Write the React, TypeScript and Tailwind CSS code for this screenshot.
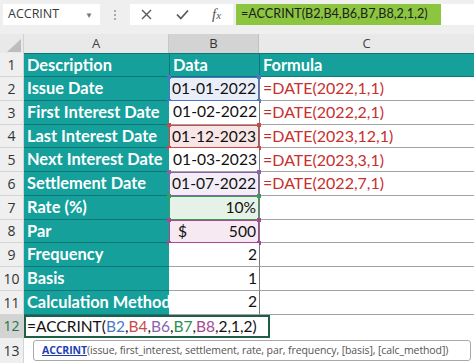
import React from 'react';

type RowData = { n: number; a: string; b: string; c?: string; dollar?: boolean; box?: string; handle?: string };

const ROWS: RowData[] = [
  { n: 2, a: 'Issue Date', b: '01-01-2022', c: '=DATE(2022,1,1)', box: 'bg-[#e9eef8] border border-[#4a78c8]', handle: 'bg-[#4a78c8]' },
  { n: 3, a: 'First Interest Date', b: '01-02-2022', c: '=DATE(2022,2,1)' },
  { n: 4, a: 'Last Interest Date', b: '01-12-2023', c: '=DATE(2023,12,1)', box: 'bg-[#f8e6e6] border border-[#c84a4a]', handle: 'bg-[#c84a4a]' },
  { n: 5, a: 'Next Interest Date', b: '01-03-2023', c: '=DATE(2023,3,1)' },
  { n: 6, a: 'Settlement Date', b: '01-07-2022', c: '=DATE(2022,7,1)', box: 'bg-[#f3edf7] border border-[#8a63ad]', handle: 'bg-[#8a63ad]' },
  { n: 7, a: 'Rate (%)', b: '10%', box: 'bg-[#e6f2e7] border border-[#3b9a5c]', handle: 'bg-[#3b9a5c]' },
  { n: 8, a: 'Par', b: '500', dollar: true, box: 'bg-[#f6e9f2] border border-[#a24a92]', handle: 'bg-[#a24a92]' },
  { n: 9, a: 'Frequency', b: '2' },
  { n: 10, a: 'Basis', b: '1' },
  { n: 11, a: 'Calculation Method', b: '2' },
];

function Handles({ cls }: { cls: string }) {
  return (
    <>
      <span className={`absolute -left-[3px] -top-[3px] w-[4px] h-[4px] ${cls}`} />
      <span className={`absolute -right-[3px] -top-[3px] w-[4px] h-[4px] ${cls}`} />
      <span className={`absolute -left-[3px] -bottom-[3px] w-[4px] h-[4px] ${cls}`} />
      <span className={`absolute -right-[3px] -bottom-[3px] w-[4px] h-[4px] ${cls}`} />
    </>
  );
}

function RowNum({ n, active }: { n: number; active?: boolean }) {
  return (
    <div className={`w-[24px] shrink-0 h-full flex items-center justify-center text-[14px] border-r border-b border-[#d4d4d4] font-['Open_Sans',sans-serif] ${active ? 'bg-[#d3d3d3] text-[#217346]' : 'bg-[#efefef] text-[#333]'}`}>
      {n}
    </div>
  );
}

export default function App() {
  return (
    <div className="w-[474px] h-[363px] overflow-hidden bg-white font-['Lato',sans-serif] text-[#111]">
      {/* formula bar */}
      <div className="h-[34px] bg-[#efefef] flex items-start pt-[4px] pl-[3px]">
        <div className="w-[97px] h-[21px] bg-white flex items-center justify-between pl-[5px] pr-[7px] font-['Open_Sans',sans-serif] text-[12.5px] text-[#3a3a3a]">
          <span>ACCRINT</span>
          <span className="text-[8px] text-[#777]">▼</span>
        </div>
        <div className="w-[30px] h-[21px] flex flex-col items-center justify-center gap-[2px]">
          <span className="w-[2px] h-[2px] bg-[#aaa]" />
          <span className="w-[2px] h-[2px] bg-[#aaa]" />
          <span className="w-[2px] h-[2px] bg-[#aaa]" />
        </div>
        <div className="w-[103px] h-[21px] bg-white flex items-center text-[#555]">
          <svg className="ml-[11px]" width="11" height="11" viewBox="0 0 11 11"><path d="M1 1 L10 10 M10 1 L1 10" stroke="#595959" strokeWidth="1.4" fill="none" /></svg>
          <svg className="ml-[24px]" width="13" height="11" viewBox="0 0 13 11"><path d="M1 5.5 L4.8 9.5 L12 1.5" stroke="#595959" strokeWidth="1.8" fill="none" /></svg>
          <span className="ml-[23px] font-['Liberation_Serif',serif] italic text-[15px] text-[#555] leading-none">f<span className="text-[11px]">x</span></span>
        </div>
        <div className="ml-[3px] w-[205px] h-[21px] bg-[#8cc540] flex items-center pl-[5px] text-[12.6px] text-[#1d1d1d] whitespace-nowrap overflow-hidden">
          =ACCRINT(B2,B4,B6,B7,B8,2,1,2)
        </div>
        <div className="flex-1 h-[21px] bg-white" />
      </div>

      {/* column headers */}
      <div className="h-[19px] flex font-['Open_Sans',sans-serif] text-[13px] text-[#444]">
        <div className="w-[24px] h-full bg-[#e9e9e9] border-r border-[#d0d0d0] relative">
          <svg className="absolute right-[2px] bottom-[1px]" width="14" height="13" viewBox="0 0 14 13"><path d="M14 0 L14 13 L0 13 Z" fill="#bdbdbd" /></svg>
        </div>
        <div className="w-[145px] h-full bg-[#e9e9e9] border-r border-[#c8c8c8] flex items-center justify-center">A</div>
        <div className="w-[90px] h-full bg-[#d3d3d3] border-r border-[#c0c0c0] flex items-center justify-center text-[#333]">B</div>
        <div className="flex-1 h-full bg-[#e9e9e9] flex items-center justify-center">C</div>
      </div>

      {/* row 1 */}
      <div className="h-[24px] flex text-[16.4px]">
        <RowNum n={1} />
        <div className="w-[145px] h-full bg-[#15a09c] border-t border-b border-[#0e7775] text-white font-bold flex items-center px-[3px]">Description</div>
        <div className="w-[90px] h-full bg-[#15a09c] border-t border-b border-l border-[#0e7775] text-white font-bold flex items-center px-[3px]">Data</div>
        <div className="flex-1 h-full bg-[#15a09c] border-t border-b border-l border-[#0e7775] text-white font-bold flex items-center px-[3px]">Formula</div>
      </div>

      {ROWS.map(r => (
        <div key={r.n} className="h-[23.75px] flex text-[16px]">
          <RowNum n={r.n} />
          <div className="w-[145px] h-full bg-[#15a09c] border-b border-[#0e7775] text-white font-bold text-[16.4px] flex items-center px-[3px] whitespace-nowrap overflow-hidden">{r.a}</div>
          <div className={`w-[90px] h-full relative flex items-center justify-end px-[2px] text-[15.6px] whitespace-nowrap ${r.box ? r.box : 'bg-white border-b border-[#a3a3a3]'}`}>
            {r.dollar && <span className="absolute left-[8px]">$</span>}
            <span>{r.b}</span>
            {r.handle && <Handles cls={r.handle} />}
          </div>
          <div className="flex-1 h-full bg-white border-b border-l border-[#a3a3a3] border-l-[#7a7a7a] flex items-center px-[3px] text-[#c7302e] whitespace-nowrap">{r.c}</div>
        </div>
      ))}

      {/* row 12 - edit */}
      <div className="h-[23.75px] flex text-[15.5px]">
        <RowNum n={12} active />
        <div className="w-[246px] h-full bg-white border-2 border-[#1f5f47] flex items-center px-[1px] whitespace-nowrap">
          <span>=ACCRINT(</span>
          <span className="text-[#4a78c8]">B2</span>,
          <span className="text-[#c84a4a]">B4</span>,
          <span className="text-[#8a63ad]">B6</span>,
          <span className="text-[#2f8f52]">B7</span>,
          <span className="text-[#a24a92]">B8</span>
          <span>,2,1,2)</span>
        </div>
        <div className="flex-1 h-full bg-white" />
      </div>

      {/* row 13 - tooltip */}
      <div className="h-[26px] flex">
        <RowNum n={13} />
        <div className="flex-1 h-full bg-white pt-[2px] pl-[9px]">
          <div className="w-[438px] h-[21px] border border-[#a9a9a9] rounded-[3px] bg-white flex items-center pl-[8px] font-['Open_Sans',sans-serif] text-[10.5px] tracking-[-0.1px] text-[#555] whitespace-nowrap overflow-hidden">
            <span className="font-bold text-[#1f3fb0] underline">ACCRINT</span>
            <span>(issue, first_interest, settlement, rate, par, frequency, [basis], [calc_method])</span>
          </div>
        </div>
      </div>
    </div>
  );
}
